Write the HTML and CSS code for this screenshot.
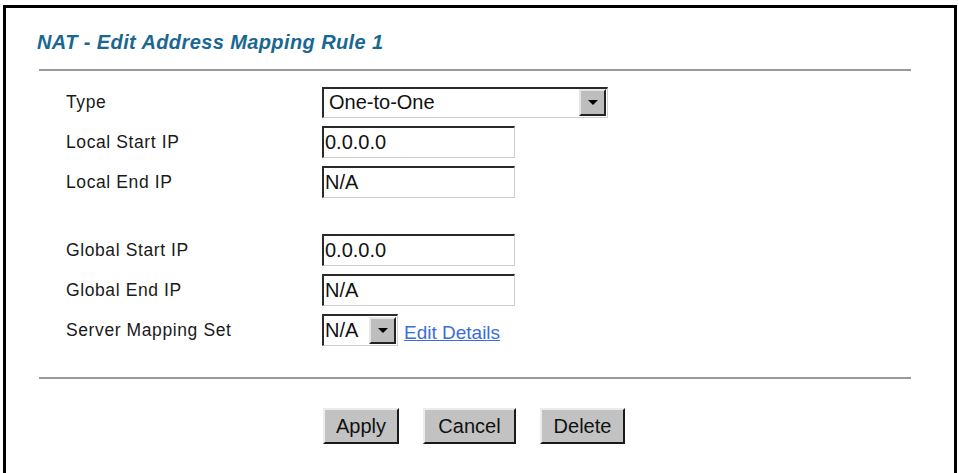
FILE: index.html
```html
<!DOCTYPE html>
<html>
<head>
<meta charset="utf-8">
<link rel="stylesheet" href="styles.css">
</head>
<body>
<div class="frame">
  <h1 class="title">NAT - Edit Address Mapping Rule 1</h1>
  <div class="rule"></div>
  <div class="form">
    <div class="row">
      <span class="label">Type</span>
      <div class="select select-wide"><span class="select-text">One-to-One</span><span class="drop"><span class="tri"></span></span></div>
    </div>
    <div class="row">
      <span class="label">Local Start IP</span>
      <input class="field" type="text" value="0.0.0.0">
    </div>
    <div class="row">
      <span class="label">Local End IP</span>
      <input class="field" type="text" value="N/A">
    </div>
    <div class="spacer"></div>
    <div class="row">
      <span class="label">Global Start IP</span>
      <input class="field" type="text" value="0.0.0.0">
    </div>
    <div class="row">
      <span class="label">Global End IP</span>
      <input class="field" type="text" value="N/A">
    </div>
    <div class="row">
      <span class="label">Server Mapping Set</span>
      <div class="select select-small"><span class="select-text small-text">N/A</span><span class="drop"><span class="tri"></span></span></div>
      <a class="link" href="#">Edit Details</a>
    </div>
  </div>
  <div class="rule rule-bottom"></div>
  <div class="buttons">
    <button class="btn btn-apply">Apply</button>
    <button class="btn btn-cancel">Cancel</button>
    <button class="btn btn-delete">Delete</button>
  </div>
</div>
</body>
</html>
```

FILE: styles.css
```css
html, body {
  margin: 0;
  padding: 0;
  background: #fff;
}

body {
  font-family: "Liberation Sans", Arial, sans-serif;
  color: #111;
  overflow: hidden;
}

.frame {
  box-sizing: border-box;
  margin: 5px 2px 0 3px;
  width: 954px;
  height: 480px;
  border: 3px solid #000;
  border-bottom: none;
  padding: 22px 43px 0 31px;
}

.title {
  margin: 0;
  font-size: 20px;
  line-height: 24px;
  font-weight: bold;
  font-style: italic;
  letter-spacing: 0.4px;
  color: #1a6792;
}

.rule {
  margin: 15px 0 0 2px;
  height: 2px;
  background: #9a9a9a;
}

.form {
  margin-top: 11px;
  padding-left: 29px;
  display: flex;
  flex-direction: column;
}

.row {
  height: 40px;
  display: flex;
  align-items: center;
}

.spacer {
  height: 28px;
}

.label {
  width: 256px;
  font-size: 17.5px;
  letter-spacing: 0.6px;
  color: #1a1a1a;
}

.field {
  box-sizing: border-box;
  width: 193px;
  height: 32px;
  margin: 0;
  padding: 0 0 0 1px;
  font-family: "Liberation Sans", Arial, sans-serif;
  font-size: 20px;
  color: #111;
  background: #fff;
  border-top: 2px solid #2a2a2a;
  border-left: 2px solid #2a2a2a;
  border-right: 1px solid #cfcfcf;
  border-bottom: 1px solid #cfcfcf;
  outline: none;
}

.select {
  box-sizing: border-box;
  height: 31px;
  display: flex;
  align-items: center;
  justify-content: space-between;
  background: #fff;
  border-top: 2px solid #2a2a2a;
  border-left: 2px solid #2a2a2a;
  border-right: 1px solid #cfcfcf;
  border-bottom: 1px solid #cfcfcf;
}

.select-wide {
  width: 286px;
}

.select-small {
  width: 76px;
  height: 32px;
}

.select-text {
  font-size: 20px;
  padding-left: 5px;
  color: #111;
}

.small-text {
  padding-left: 1px;
}

.drop {
  box-sizing: border-box;
  width: 27px;
  height: 27px;
  margin-right: 1px;
  display: flex;
  align-items: center;
  justify-content: center;
  background: #bdbdbd;
  border-top: 2px solid #e6e6e6;
  border-left: 2px solid #e6e6e6;
  border-right: 2px solid #222;
  border-bottom: 2px solid #222;
}

.tri {
  width: 0;
  height: 0;
  border-left: 5px solid transparent;
  border-right: 5px solid transparent;
  border-top: 5px solid #000;
}

.link {
  margin-left: 6px;
  margin-top: 6px;
  font-size: 19px;
  color: #3b6fd6;
  text-decoration: underline;
}

.rule-bottom {
  margin-top: 27px;
}

.buttons {
  margin-top: 29px;
  display: flex;
  justify-content: center;
  gap: 24px;
}

.btn {
  box-sizing: border-box;
  height: 36px;
  margin: 0;
  padding: 0;
  font-family: "Liberation Sans", Arial, sans-serif;
  font-size: 20px;
  color: #111;
  background: #c2c2c2;
  border-top: 2px solid #ececec;
  border-left: 2px solid #ececec;
  border-right: 2px solid #1a1a1a;
  border-bottom: 2px solid #1a1a1a;
}

.btn-apply { width: 76px; }
.btn-cancel { width: 93px; }
.btn-delete { width: 85px; }
```
